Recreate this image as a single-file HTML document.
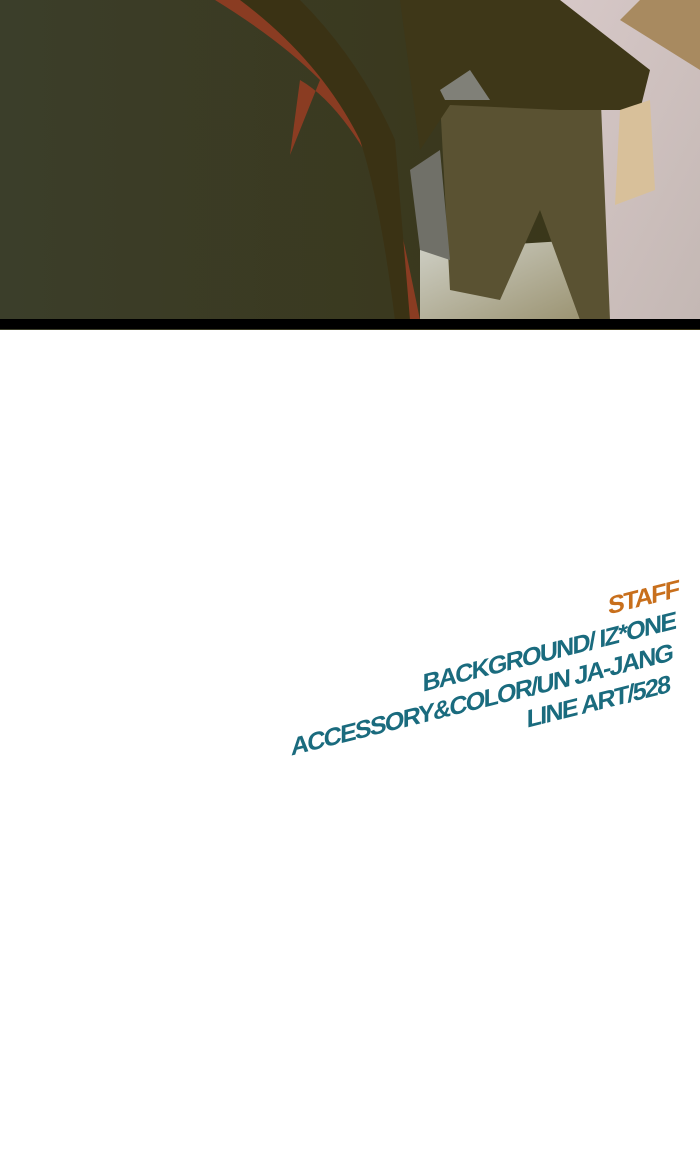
<!DOCTYPE html>
<html><head><meta charset="utf-8"><style>
html,body{margin:0;padding:0;width:700px;height:1162px;background:#fff;overflow:hidden;position:relative}
.txt{position:absolute;right:22px;top:574px;transform-origin:right top;transform:skewY(-14deg);text-align:right;font-family:"Liberation Sans",sans-serif;font-weight:bold;font-size:25px;line-height:31px;letter-spacing:-1.7px;white-space:nowrap;color:#1a6b7e}
.txt div{display:block}
.o{color:#c86f1c}
</style></head><body>
<svg width="700" height="330" style="position:absolute;left:0;top:0" viewBox="0 0 700 330">
<defs>
<linearGradient id="bg" x1="0" y1="0" x2="1" y2="0"><stop offset="0" stop-color="#3b3e2a"/><stop offset="1" stop-color="#3a3516"/></linearGradient>
<linearGradient id="wall" x1="0" y1="0" x2="1" y2="1"><stop offset="0" stop-color="#d8c9c9"/><stop offset="1" stop-color="#c4b8b4"/></linearGradient>
<linearGradient id="fl" x1="0" y1="0" x2="1" y2="1"><stop offset="0" stop-color="#cfd0c6"/><stop offset="1" stop-color="#9a9270"/></linearGradient>
</defs>
<rect width="700" height="330" fill="url(#bg)"/>
<polygon points="540,0 700,0 700,320 580,320 600,100" fill="url(#wall)"/>
<polygon points="640,0 700,0 700,70 620,20" fill="#a88a60"/>
<polygon points="420,250 580,240 590,320 420,320" fill="url(#fl)"/>
<polygon points="440,100 600,80 610,320 580,320 540,210 500,300 450,290" fill="#5a5232"/>
<polygon points="400,0 560,0 650,70 640,110 560,110 450,105 420,150" fill="#3e3718"/>
<polygon points="440,90 470,70 490,100 445,100" fill="#808078"/>
<polygon points="410,170 440,150 450,260 420,250" fill="#707068"/>
<polygon points="620,110 650,100 655,190 615,205" fill="#d8c09a"/>
<path d="M215,0 L255,0 Q340,70 380,140 Q400,220 420,320 L405,320 Q385,230 370,160 Q335,100 300,80 L290,155 L320,80 Q280,40 215,0Z" fill="#8a3c22"/>
<path d="M240,0 L300,0 Q360,60 395,140 L410,320 L395,320 Q380,200 360,140 Q320,60 240,0Z" fill="#3a3214"/>
<rect y="319" width="700" height="10" fill="#000"/>
</svg>
<div class="txt"><div class="o">STAFF</div><div style="padding-right:3px">BACKGROUND/ IZ*ONE</div><div style="padding-right:6px">ACCESSORY&amp;COLOR/UN JA-JANG</div><div style="padding-right:9px">LINE ART/528</div></div>
</body></html>
